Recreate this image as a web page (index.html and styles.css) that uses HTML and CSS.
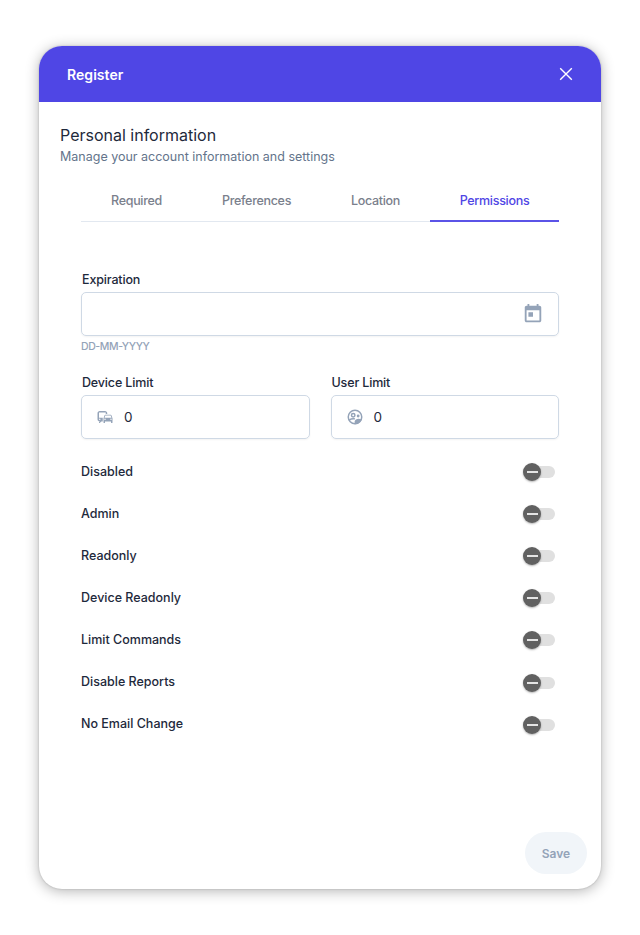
FILE: index.html
```html
<!DOCTYPE html>
<html lang="en">

<head>
    <meta charset="UTF-8">
    <meta name="viewport" content="width=device-width, initial-scale=1.0">
    <title>Register</title>
    <link rel="stylesheet" href="styles.css">
</head>

<body>
    <div class="dialog">
        <header class="dialog-header">
            <h1>Register</h1>
            <button class="close" aria-label="Close">
                <svg width="14" height="14" viewBox="0 0 14 14">
                    <path d="M1.2 1.2l11.6 11.6M12.8 1.2L1.2 12.8" />
                </svg>
            </button>
        </header>

        <section class="intro">
            <h2>Personal information</h2>
            <p>Manage your account information and settings</p>
        </section>

        <form class="content">
            <nav class="tabs">
                <a class="tab tab-required">Required</a>
                <a class="tab tab-preferences">Preferences</a>
                <a class="tab tab-location">Location</a>
                <a class="tab active">Permissions</a>
            </nav>

            <div class="field expiration">
                <label>Expiration</label>
                <div class="input input-date">
                    <svg class="icon-date" viewBox="0 0 24 24">
                        <path d="M19 3h-1V1h-2v2H8V1H6v2H5c-1.11 0-1.99.9-1.99 2L3 19c0 1.1.89 2 2 2h14c1.1 0 2-.9 2-2V5c0-1.1-.9-2-2-2zm0 16H5V8h14v11zM7 10h5v5H7z" />
                    </svg>
                </div>
                <small>DD-MM-YYYY</small>
            </div>

            <div class="limits">
                <div class="field">
                    <label>Device Limit</label>
                    <div class="input">
                        <svg class="icon" viewBox="0 0 24 24">
                            <path d="M12 4H5C3.34 4 2 5.34 2 7v8c0 1.66 1.34 3 3 3l-1 1v1h1l2-2.03L9 18v-5H4V5.98L13 6v2h2V7c0-1.66-1.34-3-3-3zM5 14c.55 0 1 .45 1 1s-.45 1-1 1-1-.45-1-1 .45-1 1-1zm15.57-4.34c-.14-.4-.52-.66-.97-.66h-7.19c-.46 0-.83.26-.98.66L10 13.77l.01 5.51c0 .38.31.72.69.72h.62c.38 0 .68-.38.68-.76V18h8v1.24c0 .38.31.76.69.76h.61c.38 0 .69-.34.69-.72l.01-1.37v-4.14l-1.43-4.11zm-8.16.34h7.19l1.03 3h-9.25l1.03-3zM12 16c-.55 0-1-.45-1-1s.45-1 1-1 1 .45 1 1-.45 1-1 1zm8 0c-.55 0-1-.45-1-1s.45-1 1-1 1 .45 1 1-.45 1-1 1z" />
                        </svg>
                        <span class="value">0</span>
                    </div>
                </div>
                <div class="field">
                    <label>User Limit</label>
                    <div class="input">
                        <svg class="icon" viewBox="0 0 24 24">
                            <circle class="line" cx="12" cy="12" r="9" />
                            <circle class="line" cx="9.6" cy="9.6" r="2.3" />
                            <circle cx="16.2" cy="10.6" r="1.9" />
                            <path class="line" d="M4.5 16c2-1.5 4.5-2 7.5-1.5" />
                            <path d="M11.5 21.5V18c0-2.4 3-3.8 5-3.8 1.4 0 3 .4 4.5 1.3-1.5 3.5-5 6-9.5 6z" />
                        </svg>
                        <span class="value">0</span>
                    </div>
                </div>
            </div>

            <ul class="permissions">
                <li>Disabled <i class="switch"></i></li>
                <li>Admin <i class="switch"></i></li>
                <li>Readonly <i class="switch"></i></li>
                <li>Device Readonly <i class="switch"></i></li>
                <li>Limit Commands <i class="switch"></i></li>
                <li>Disable Reports <i class="switch"></i></li>
                <li>No Email Change <i class="switch"></i></li>
            </ul>
        </form>

        <footer class="dialog-footer">
            <button class="save" disabled>Save</button>
        </footer>
    </div>
</body>

</html>
```

FILE: styles.css
```css
* {
    box-sizing: border-box;
    margin: 0;
    padding: 0;
}

body {
    font-family: Inter, "Liberation Sans", sans-serif;
    font-size: 12.5px;
    color: #1e293b;
    background-color: #fff;
    padding: 46px 39px;
}

button {
    border: none;
    font-family: inherit;
}

.dialog {
    display: flex;
    flex-direction: column;
    height: 843px;
    border-radius: 23px;
    overflow: hidden;
    background-color: #fff;
    box-shadow: 0 0 2px rgba(0, 0, 0, 0.2), 0 2px 14px rgba(0, 0, 0, 0.3);
}

.dialog-header {
    display: flex;
    justify-content: space-between;
    align-items: center;
    height: 56px;
    padding: 0 28px;
    background-color: #4f46e5;
    color: #fff;
}

.dialog-header h1 {
    font-size: 14px;
    font-weight: 600;
    letter-spacing: 0.05px;
}

.close {
    display: flex;
    background: none;
}

.close svg {
    fill: none;
    stroke: #fff;
    stroke-width: 1.4;
}

.intro {
    padding: 23px 21px 0;
}

.intro h2 {
    font-size: 16px;
    font-weight: 400;
    line-height: 21px;
}

.intro p {
    color: #64748b;
    line-height: 21px;
}

.content {
    padding: 12px 42px 0;
}

.tabs {
    display: flex;
    height: 43px;
    border-bottom: 1px solid #e2e8f0;
}

.tab {
    height: 43px;
    line-height: 44px;
    text-align: center;
    font-weight: 500;
    letter-spacing: -0.3px;
    color: #7a808c;
}

.tab-required {
    width: 111px;
}

.tab-preferences {
    width: 129px;
}

.tab-location {
    width: 109px;
}

.tab.active {
    flex: 1;
    color: #4f46e5;
    border-bottom: 2px solid #5b53e7;
}

.expiration {
    margin-top: 49px;
}

.field label {
    display: block;
    height: 21px;
    padding-left: 1px;
    line-height: 17px;
    font-weight: 500;
    letter-spacing: -0.15px;
}

.field small {
    display: block;
    height: 21px;
    line-height: 21px;
    font-size: 10.5px;
    font-weight: 500;
    letter-spacing: -0.4px;
    color: #94a3b8;
}

.input {
    display: flex;
    align-items: center;
    height: 44px;
    padding-left: 14px;
    border: 1px solid #cfd9e5;
    border-radius: 5px;
    box-shadow: 0 1px 2px rgba(0, 0, 0, 0.05);
}

.input-date {
    justify-content: flex-end;
    padding-right: 14px;
}

.icon-date {
    width: 22px;
    height: 22px;
    fill: #94a3b8;
}

.icon {
    width: 18px;
    height: 18px;
    margin-right: 10px;
    fill: #94a3b8;
}

.value {
    font-size: 13.5px;
}

.line {
    fill: none;
    stroke: #94a3b8;
    stroke-width: 2;
}

.limits {
    display: grid;
    grid-template-columns: 1fr 1fr;
    gap: 21px;
    margin-top: 17px;
}

.permissions {
    margin-top: 11px;
    list-style: none;
}

.permissions li {
    display: flex;
    justify-content: space-between;
    align-items: center;
    height: 42.1px;
    padding-right: 4px;
    font-weight: 500;
}

.switch {
    position: relative;
    width: 30px;
    height: 12px;
    border-radius: 6px;
    background-color: #e0e0e0;
    margin-top: 2px;
}

.switch::before {
    content: "";
    position: absolute;
    left: -2px;
    top: -3px;
    width: 18px;
    height: 18px;
    border-radius: 50%;
    background: linear-gradient(#e4e4e4, #e4e4e4) center / 11px 2px no-repeat #616161;
    box-shadow: 0 1px 2px rgba(0, 0, 0, 0.3);
}

.dialog-footer {
    display: flex;
    justify-content: flex-end;
    margin-top: auto;
    padding: 0 14px 15px;
}

.save {
    width: 62px;
    height: 42px;
    border-radius: 21px;
    background-color: #f1f5f9;
    color: #94a3b8;
    font-size: 12px;
    font-weight: 600;
}
```
